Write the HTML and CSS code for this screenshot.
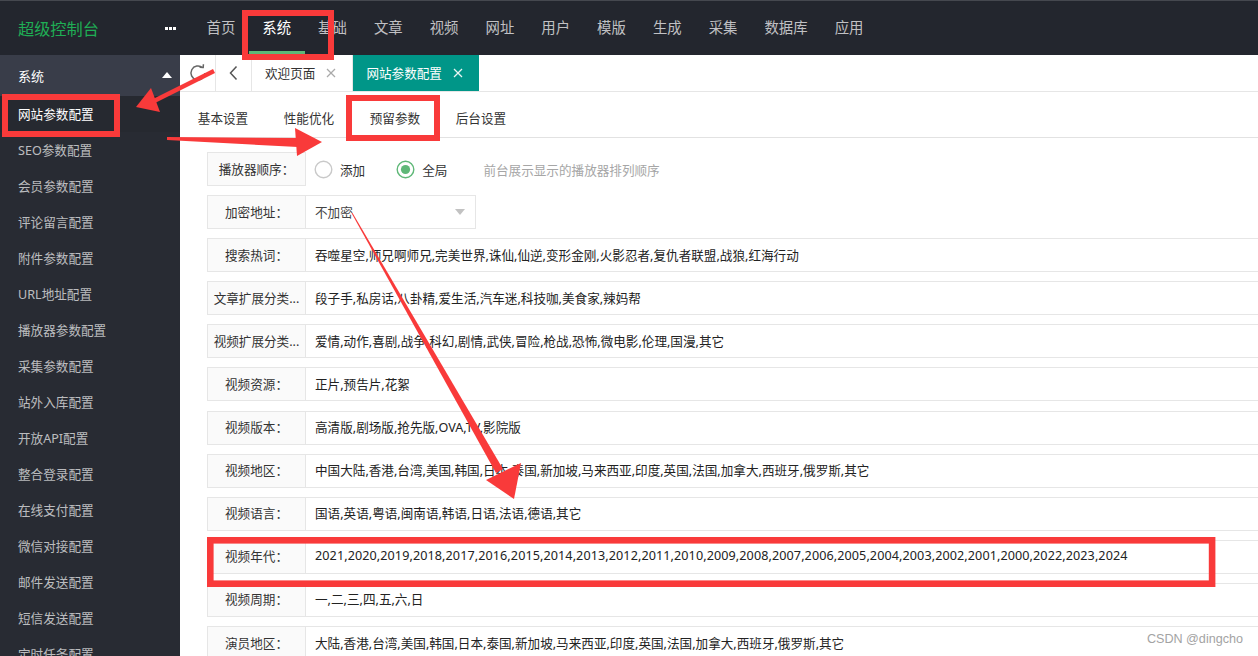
FILE: index.html
```html
<!DOCTYPE html>
<html lang="zh-CN">
<head>
<meta charset="utf-8">
<title>超级控制台</title>
<link rel="stylesheet" href="styles.css">
</head>
<body>
<header class="topbar">
  <div class="logo">
    <span class="logo-text">超级控制台</span>
    <svg class="dots" width="11" height="3" viewBox="0 0 11 3"><rect x="0" y="0" width="3" height="3" fill="#fff"/><rect x="4" y="0" width="3" height="3" fill="#fff"/><rect x="8" y="0" width="3" height="3" fill="#fff"/></svg>
  </div>
  <nav class="topnav">
    <span class="nav-item">首页</span>
    <span class="nav-item active">系统</span>
    <span class="nav-item">基础</span>
    <span class="nav-item">文章</span>
    <span class="nav-item">视频</span>
    <span class="nav-item">网址</span>
    <span class="nav-item">用户</span>
    <span class="nav-item">模版</span>
    <span class="nav-item">生成</span>
    <span class="nav-item">采集</span>
    <span class="nav-item">数据库</span>
    <span class="nav-item">应用</span>
  </nav>
</header>
<div class="layout">
  <aside class="side">
    <div class="side-head"><span>系统</span><span class="tri"></span></div>
    <ul class="side-list">
      <li class="side-item active">网站参数配置</li>
      <li class="side-item">SEO参数配置</li>
      <li class="side-item">会员参数配置</li>
      <li class="side-item">评论留言配置</li>
      <li class="side-item">附件参数配置</li>
      <li class="side-item">URL地址配置</li>
      <li class="side-item">播放器参数配置</li>
      <li class="side-item">采集参数配置</li>
      <li class="side-item">站外入库配置</li>
      <li class="side-item">开放API配置</li>
      <li class="side-item">整合登录配置</li>
      <li class="side-item">在线支付配置</li>
      <li class="side-item">微信对接配置</li>
      <li class="side-item">邮件发送配置</li>
      <li class="side-item">短信发送配置</li>
      <li class="side-item">定时任务配置</li>
    </ul>
  </aside>
  <main class="main">
    <div class="tabbar">
      <div class="tb-btn">
        <svg width="20" height="20" viewBox="0 0 20 20" fill="none" stroke="#666" stroke-width="1.5"><path d="M17 10 A7 7 0 1 1 14.6 4.7"/><path d="M11.6 4.2 L15.2 4.4 L15.4 1.2" stroke-linejoin="miter"/></svg>
      </div>
      <div class="tb-btn">
        <svg width="20" height="20" viewBox="0 0 20 20" fill="none" stroke="#555" stroke-width="1.5"><polyline points="12.5,3.5 6.5,10 12.5,16.5"/></svg>
      </div>
      <div class="tab">
        <span>欢迎页面</span>
        <svg class="close" width="10" height="10" viewBox="0 0 10 10" stroke="#aaa" stroke-width="1.3"><line x1="1" y1="1" x2="9" y2="9"/><line x1="9" y1="1" x2="1" y2="9"/></svg>
      </div>
      <div class="tab active">
        <span>网站参数配置</span>
        <svg class="close" width="10" height="10" viewBox="0 0 10 10" stroke="#e8f5f3" stroke-width="1.3"><line x1="1" y1="1" x2="9" y2="9"/><line x1="9" y1="1" x2="1" y2="9"/></svg>
      </div>
    </div>
    <div class="subtabs">
      <span class="subtab">基本设置</span>
      <span class="subtab">性能优化</span>
      <span class="subtab active">预留参数</span>
      <span class="subtab">后台设置</span>
    </div>
    <div class="form">
      <div class="row">
        <div class="label">播放器顺序：</div>
        <div class="radios">
          <span class="radio">
            <svg width="19" height="19" viewBox="0 0 19 19"><circle cx="9.5" cy="9.5" r="8.3" fill="#fff" stroke="#c9c9c9" stroke-width="1.4"/></svg>
            <span>添加</span>
          </span>
          <span class="radio">
            <svg width="19" height="19" viewBox="0 0 19 19"><circle cx="9.5" cy="9.5" r="8.3" fill="#fff" stroke="#5fb878" stroke-width="1.4"/><circle cx="9.5" cy="9.5" r="4.6" fill="#5fb878"/></svg>
            <span>全局</span>
          </span>
          <span class="hint">前台展示显示的播放器排列顺序</span>
        </div>
      </div>
      <div class="row">
        <div class="label">加密地址：</div>
        <div class="select"><span>不加密</span><span class="caret"></span></div>
      </div>
      <div class="row">
        <div class="label">搜索热词：</div>
        <div class="input">吞噬星空,师兄啊师兄,完美世界,诛仙,仙逆,变形金刚,火影忍者,复仇者联盟,战狼,红海行动</div>
      </div>
      <div class="row">
        <div class="label">文章扩展分类...</div>
        <div class="input">段子手,私房话,八卦精,爱生活,汽车迷,科技咖,美食家,辣妈帮</div>
      </div>
      <div class="row">
        <div class="label">视频扩展分类...</div>
        <div class="input">爱情,动作,喜剧,战争,科幻,剧情,武侠,冒险,枪战,恐怖,微电影,伦理,国漫,其它</div>
      </div>
      <div class="row">
        <div class="label">视频资源：</div>
        <div class="input">正片,预告片,花絮</div>
      </div>
      <div class="row">
        <div class="label">视频版本：</div>
        <div class="input">高清版,剧场版,抢先版,OVA,TV,影院版</div>
      </div>
      <div class="row">
        <div class="label">视频地区：</div>
        <div class="input">中国大陆,香港,台湾,美国,韩国,日本,泰国,新加坡,马来西亚,印度,英国,法国,加拿大,西班牙,俄罗斯,其它</div>
      </div>
      <div class="row">
        <div class="label">视频语言：</div>
        <div class="input">国语,英语,粤语,闽南语,韩语,日语,法语,德语,其它</div>
      </div>
      <div class="row">
        <div class="label">视频年代：</div>
        <div class="input num">2021,2020,2019,2018,2017,2016,2015,2014,2013,2012,2011,2010,2009,2008,2007,2006,2005,2004,2003,2002,2001,2000,2022,2023,2024</div>
      </div>
      <div class="row">
        <div class="label">视频周期：</div>
        <div class="input">一,二,三,四,五,六,日</div>
      </div>
      <div class="row">
        <div class="label">演员地区：</div>
        <div class="input">大陆,香港,台湾,美国,韩国,日本,泰国,新加坡,马来西亚,印度,英国,法国,加拿大,西班牙,俄罗斯,其它</div>
      </div>
    </div>
  </main>
</div>

<svg class="annot" width="1258" height="656" viewBox="0 0 1258 656">
  <g fill="none" stroke="#f93a3a">
    <rect x="245" y="13" width="86" height="44" stroke-width="6"/>
    <rect x="5" y="97" width="112" height="37" stroke-width="6"/>
    <rect x="349" y="98" width="88" height="40" stroke-width="6"/>
    <rect x="210.3" y="540.3" width="1001.8" height="43.4" stroke-width="6.6"/>
  </g>
  <g fill="#f93a3a">
    <polygon points="213,69 215,73 153,104 151,100"/>
    <polygon points="136,107 151,88 160,112"/>
    <polygon points="167,137 298,138 298,147 167,140"/>
    <polygon points="295,128 322,142 297,156"/>
    <polygon points="352.4,212.7 351.6,213.3 496,473 503,469"/>
    <polygon points="486,480 514,499 521,463"/>
  </g>
</svg>
<div class="watermark">CSDN @dingcho</div>
</body>
</html>
```
FILE: styles.css
```css
* {
  box-sizing: border-box;
  margin: 0;
  padding: 0;
}

body {
  margin: 0;
  width: 1258px;
  height: 656px;
  overflow: hidden;
  position: relative;
  background: #fff;
  font-family: "Noto Sans", "Noto Sans CJK SC", sans-serif;
  font-size: 12.6px;
  color: #333;
}

ul {
  list-style: none;
}

/* ---------- top bar ---------- */
.topbar {
  height: 55px;
  background: #23262e;
  border-top: 1px solid #45484f;
  display: flex;
  align-items: stretch;
}

.logo {
  width: 180px;
  flex-shrink: 0;
  display: flex;
  align-items: center;
  padding: 0 4px 0 18px;
}

.logo-text {
  flex: 1;
  color: #1fae55;
  font-size: 16.2px;
}

.dots {
  display: block;
}

.topnav {
  display: flex;
  padding-left: 13px;
}

.nav-item {
  position: relative;
  display: flex;
  align-items: center;
  padding: 0 13.5px 3px;
  color: rgba(255, 255, 255, 0.72);
  font-size: 14.4px;
}

.nav-item.active {
  color: #fff;
}

.nav-item.active::after {
  content: "";
  position: absolute;
  left: 0;
  right: 0;
  bottom: 1px;
  height: 3px;
  background: #5fb878;
}

/* ---------- layout ---------- */
.layout {
  display: flex;
  height: 601px;
}

.side {
  width: 180px;
  flex-shrink: 0;
  background: #282b33;
}

.side-head {
  height: 41px;
  background: #393d49;
  color: #fff;
  font-size: 13px;
  display: flex;
  align-items: center;
  justify-content: space-between;
  padding: 0 8px 1px 18px;
}

.tri {
  width: 0;
  height: 0;
  border-left: 5px solid transparent;
  border-right: 5px solid transparent;
  border-bottom: 6px solid #fff;
}

.side-item {
  height: 36px;
  display: flex;
  align-items: center;
  padding: 0 0 1px 18px;
  color: rgba(255, 255, 255, 0.7);
  white-space: nowrap;
}

.side-item.active {
  color: #fff;
  background: #262930;
}

.main {
  flex: 1;
  min-width: 0;
  overflow: hidden;
}

/* ---------- tab bar ---------- */
.tabbar {
  height: 37px;
  border-bottom: 1px solid #e6e6e6;
  display: flex;
}

.tb-btn {
  width: 36px;
  border-right: 1px solid #e6e6e6;
  display: flex;
  align-items: center;
  justify-content: center;
}

.tab {
  display: flex;
  align-items: center;
  gap: 11px;
  padding: 0 16px 1px 13px;
  border-right: 1px solid #e6e6e6;
  color: #333;
  white-space: nowrap;
}

.tab.active {
  background: #009688;
  color: #fff;
  border-right: 0;
}

.close {
  display: block;
}

/* ---------- sub tabs ---------- */
.subtabs {
  margin-top: 7px;
  height: 39px;
  border-bottom: 1px solid #e2e2e2;
  display: flex;
}

.subtab {
  display: flex;
  align-items: center;
  padding: 0 17.8px 1px;
  color: #333;
}

/* ---------- form ---------- */
.form {
  padding: 14px 0 0 27px;
  margin-right: -200px;
}

.row {
  display: flex;
  height: 34px;
  margin-bottom: 9.1px;
}

.label {
  width: 99px;
  flex-shrink: 0;
  border: 1px solid #e6e6e6;
  background: #fafafa;
  display: flex;
  align-items: center;
  justify-content: center;
  padding: 0 4px 2px;
  white-space: nowrap;
  overflow: hidden;
  color: #333;
}

.input {
  flex: 1;
  border: 1px solid #e6e6e6;
  border-left: 0;
  display: flex;
  align-items: center;
  padding: 0 0 2px 9px;
  white-space: nowrap;
  color: #222;
}

.input.num {
  letter-spacing: 0.09px;
}

.radios {
  display: flex;
  align-items: center;
  padding-left: 8px;
}

.radio {
  display: flex;
  align-items: center;
  gap: 7px;
  margin-right: 31px;
  color: #333;
}

.radio svg {
  display: block;
}

.hint {
  margin-left: 5px;
  color: #a6a6a6;
}

.select {
  width: 170px;
  border: 1px solid #e6e6e6;
  border-left: 0;
  display: flex;
  align-items: center;
  justify-content: space-between;
  padding: 0 10px 1px 9px;
  color: #444;
}

.caret {
  width: 0;
  height: 0;
  border-left: 5.5px solid transparent;
  border-right: 5.5px solid transparent;
  border-top: 6px solid #c2c2c2;
}

/* ---------- overlays ---------- */
.annot {
  position: absolute;
  left: 0;
  top: 0;
  pointer-events: none;
}

.watermark {
  position: absolute;
  right: 15px;
  top: 632px;
  font-family: "Liberation Sans", Arial, sans-serif;
  font-size: 12.6px;
  color: #a3a3a3;
}
```
